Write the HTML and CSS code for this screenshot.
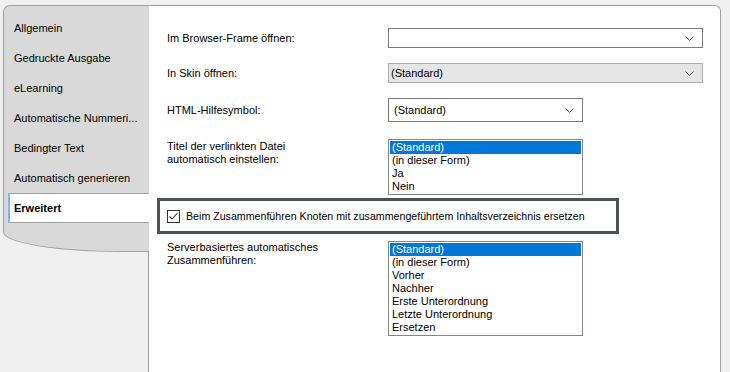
FILE: index.html
```html
<!DOCTYPE html>
<html lang="de">
<head>
    <meta charset="UTF-8">
    <title>Erweitert</title>
    <link rel="stylesheet" href="styles.css">
</head>
<body>
    <div class="dialog">
        <ul class="tabs">
            <li class="tab">Allgemein</li>
            <li class="tab">Gedruckte Ausgabe</li>
            <li class="tab">eLearning</li>
            <li class="tab">Automatische Nummeri...</li>
            <li class="tab">Bedingter Text</li>
            <li class="tab">Automatisch generieren</li>
            <li class="tab active">Erweitert</li>
        </ul>

        <div class="panel">
            <!-- Browser-Frame -->
            <div class="row row-frame">
                <label class="field-label">Im Browser-Frame öffnen:</label>
                <div class="combo combo-wide">
                    <span class="combo-text"></span>
                    <svg class="chevron" width="9" height="5" viewBox="0 0 9 5"><polyline points="0.5,0.5 4.5,4.5 8.5,0.5" fill="none" stroke="#555" stroke-width="1"/></svg>
                </div>
            </div>

            <!-- Skin -->
            <div class="row row-skin">
                <label class="field-label">In Skin öffnen:</label>
                <div class="combo combo-wide combo-disabled">
                    <span class="combo-text">(Standard)</span>
                    <svg class="chevron" width="9" height="5" viewBox="0 0 9 5"><polyline points="0.5,0.5 4.5,4.5 8.5,0.5" fill="none" stroke="#555" stroke-width="1"/></svg>
                </div>
            </div>

            <!-- Hilfesymbol -->
            <div class="row row-help">
                <label class="field-label">HTML-Hilfesymbol:</label>
                <div class="combo combo-narrow">
                    <span class="combo-text">(Standard)</span>
                    <svg class="chevron" width="9" height="5" viewBox="0 0 9 5"><polyline points="0.5,0.5 4.5,4.5 8.5,0.5" fill="none" stroke="#555" stroke-width="1"/></svg>
                </div>
            </div>

            <!-- Titel -->
            <div class="row row-list row-title">
                <label class="field-label">Titel der verlinkten Datei<br>automatisch einstellen:</label>
                <ul class="listbox">
                    <li class="selected">(Standard)</li>
                    <li>(in dieser Form)</li>
                    <li>Ja</li>
                    <li>Nein</li>
                </ul>
            </div>

            <!-- Checkbox -->
            <div class="check-frame">
                <span class="checkbox">
                    <svg width="11" height="11" viewBox="0 0 11 11"><polyline points="1.5,5.5 4,8 9.5,2" fill="none" stroke="#333" stroke-width="1.1"/></svg>
                </span>
                <span class="check-label">Beim Zusammenführen Knoten mit zusammengeführtem Inhaltsverzeichnis ersetzen</span>
            </div>

            <!-- Serverbasiert -->
            <div class="row row-list row-merge">
                <label class="field-label">Serverbasiertes automatisches<br>Zusammenführen:</label>
                <ul class="listbox">
                    <li class="selected">(Standard)</li>
                    <li>(in dieser Form)</li>
                    <li>Vorher</li>
                    <li>Nachher</li>
                    <li>Erste Unterordnung</li>
                    <li>Letzte Unterordnung</li>
                    <li>Ersetzen</li>
                </ul>
            </div>
        </div>
    </div>
</body>
</html>
```

FILE: styles.css
```css
html, body {
    margin: 0;
    padding: 0;
}
body {
    width: 730px;
    height: 372px;
    overflow: hidden;
    background-color: #f0f0f0;
    font-family: "Liberation Sans", Arial, sans-serif;
    font-size: 11px;
    color: #000;
}
.dialog {
    display: flex;
    align-items: flex-start;
    padding: 5px 9px 0 3px;
    height: 367px;
}
.tabs {
    list-style: none;
    margin: 0 -1px 0 0;
    padding: 7px 0 28px 0;
    width: 145px;
    flex-shrink: 0;
    background: #d9d9d9;
    border: 1px solid #a0a0a0;
    border-right: none;
    border-radius: 7px 0 0 0;
    border-bottom-left-radius: 120px 20px;
    position: relative;
    z-index: 1;
}
.tab {
    height: 30px;
    line-height: 30px;
    padding-left: 10px;
    white-space: nowrap;
}
.tab.active {
    margin-left: 4px;
    padding-left: 4px;
    height: 28px;
    line-height: 28px;
    background: #fff;
    border-top: 1px solid #a0a0a0;
    border-bottom: 1px solid #a0a0a0;
    border-left: 2px solid #7ab8ee;
    font-weight: bold;
}
.panel {
    flex: 1;
    height: 380px;
    background: #fff;
    border: 1px solid #a0a0a0;
    border-bottom: none;
    border-top-right-radius: 6px;
    padding-left: 8px;
    display: flex;
    flex-direction: column;
    align-items: flex-start;
}
.row {
    display: flex;
    align-items: center;
    padding-left: 10px;
}
.row-list {
    align-items: flex-start;
}
.row-frame { margin-top: 22px; }
.row-skin { margin-top: 15px; }
.row-help { margin-top: 15px; }
.row-title { margin-top: 17px; }
.row-merge { margin-top: 7px; }
.field-label {
    width: 221px;
    line-height: 13px;
}
.row-title .field-label {
    padding-top: 1px;
}
.combo {
    box-sizing: border-box;
    display: flex;
    align-items: center;
    justify-content: space-between;
    border: 1px solid #7a7a7a;
    background: #fff;
    padding: 0 8px 0 2px;
}
.combo-wide {
    width: 315px;
    height: 20px;
}
.combo-narrow {
    width: 195px;
    height: 24px;
    padding-left: 5px;
}
.combo-disabled {
    background: #e5e5e5;
    border-color: #adadad;
}
.chevron {
    display: block;
}
.listbox {
    list-style: none;
    margin: 0;
    box-sizing: border-box;
    width: 195px;
    padding: 1px;
    border: 1px solid #828790;
    background: #fff;
}
.listbox li {
    height: 13px;
    line-height: 13px;
    padding-left: 2px;
    white-space: nowrap;
}
.listbox li.selected {
    background: #0078d7;
    color: #fff;
}
.check-frame {
    box-sizing: border-box;
    margin-top: 3px;
    width: 462px;
    height: 36px;
    border: 3px solid #4b5452;
    display: flex;
    align-items: center;
    padding-left: 7px;
}
.checkbox {
    box-sizing: border-box;
    width: 13px;
    height: 13px;
    border: 1px solid #333;
    background: #fff;
    display: flex;
    align-items: center;
    justify-content: center;
    margin-right: 6px;
}
.checkbox svg {
    display: block;
}
.check-label {
    font-size: 10.65px;
}
```
